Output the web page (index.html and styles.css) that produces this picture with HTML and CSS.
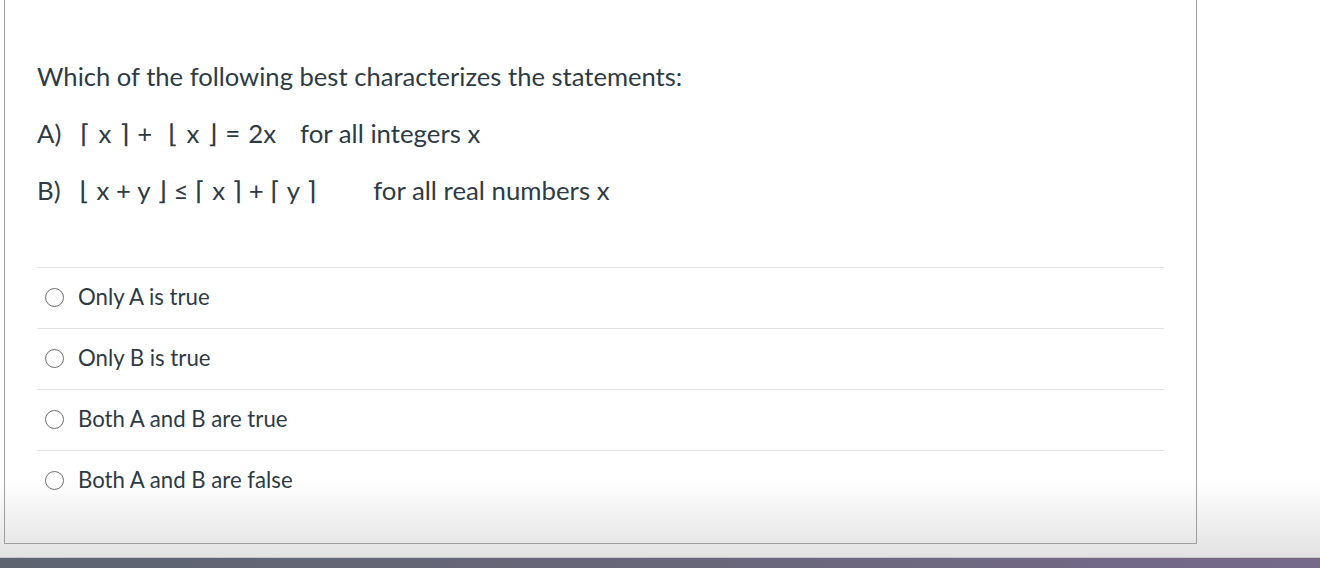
FILE: index.html
```html
<!DOCTYPE html>
<html>
<head>
<meta charset="utf-8">
<link rel="stylesheet" href="styles.css">
</head>
<body>
<div class="page">
  <div class="main">
    <div class="box">
      <div class="question">
        <p class="q-title">Which of the following best characterizes the statements:</p>
        <p class="stmt"><span class="lbl">A)</span><span class="m m-a">⌈ x ⌉ +&nbsp; ⌊ x ⌋ = 2x</span><span class="tail">for all integers x</span></p>
        <p class="stmt"><span class="lbl">B)</span><span class="m m-b">⌊ x + y ⌋ ≤ ⌈ x ⌉ + ⌈ y ⌉</span><span class="tail tail-b">for all real numbers x</span></p>
      </div>
      <div class="answers">
        <label class="answer"><span class="radio"></span><span class="atext">Only A is true</span></label>
        <label class="answer"><span class="radio"></span><span class="atext">Only B is true</span></label>
        <label class="answer"><span class="radio"></span><span class="atext">Both A and B are true</span></label>
        <label class="answer"><span class="radio"></span><span class="atext">Both A and B are false</span></label>
      </div>
    </div>
  </div>
  <div class="bar"></div>
</div>
</body>
</html>
```
FILE: styles.css
```css
html, body {
  margin: 0;
  padding: 0;
  background: #fff;
}
body {
  font-family: Lato, "Noto Sans", "DejaVu Sans", sans-serif;
  color: #2d3b45;
  overflow: hidden;
}
.page {
  width: 1320px;
  height: 568px;
  display: flex;
  flex-direction: column;
}
.main {
  height: 557px;
  background: linear-gradient(to bottom, #ffffff 0px, #ffffff 480px, #e2e2e2 557px);
  padding-left: 4px;
}
.box {
  width: 1193px;
  height: 544px;
  border: 1px solid #a0a0a0;
  border-top: none;
  box-sizing: border-box;
  padding: 0 32px 0 32px;
}
.question {
  padding-top: 60px;
}
.q-title {
  margin: 0;
  font-size: 25.6px;
  line-height: 32px;
}
.stmt {
  margin: 25px 0 0 0;
  font-size: 25.8px;
  line-height: 32px;
  white-space: pre;
}
.lbl {
  margin-right: 19px;
}
.m-a {
  word-spacing: 1.4px;
}
.m-b {
  word-spacing: 0.2px;
}
.tail {
  margin-left: 24px;
}
.tail-b {
  margin-left: 57px;
}
.answers {
  margin-top: 61px;
}
.answer {
  display: flex;
  align-items: center;
  height: 60px;
  border-top: 1px solid #e3e3e3;
  font-size: 22.2px;
}
.atext {
  position: relative;
  top: -2px;
}
.radio {
  width: 19px;
  height: 19px;
  border: 1.5px solid #6e6e6e;
  border-radius: 50%;
  margin-left: 8px;
  margin-right: 14px;
  box-sizing: border-box;
  flex: none;
  position: relative;
  top: -1px;
}
.bar {
  height: 11px;
  border-top: 1px solid #c6c6ca;
  box-sizing: border-box;
  background: linear-gradient(to right, #5e6571 0%, #69667a 55%, #766a8b 100%);
}
```
